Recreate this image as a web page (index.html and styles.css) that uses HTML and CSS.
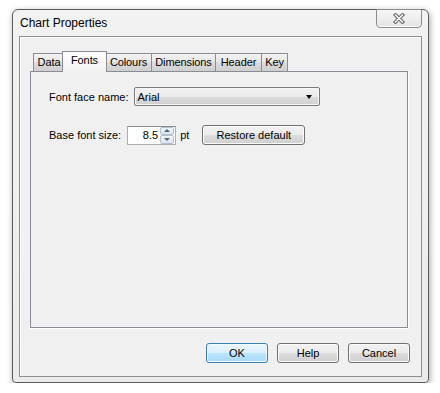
FILE: index.html
```html
<!DOCTYPE html>
<html>
<head>
<meta charset="utf-8">
<link rel="stylesheet" href="styles.css">
</head>
<body>
<div class="window">
  <div class="titlebar">
    <span class="title">Chart Properties</span>
    <div class="close">
      <svg width="14" height="11" viewBox="0 0 14 11">
        <path d="M3.5 2 L10.5 9 M10.5 2 L3.5 9" stroke="#6b6b6b" stroke-width="3.6" stroke-linecap="square" fill="none"/>
        <path d="M3.5 2 L10.5 9 M10.5 2 L3.5 9" stroke="#ffffff" stroke-width="1.4" stroke-linecap="square" fill="none"/>
      </svg>
    </div>
  </div>
  <div class="client">
    <div class="notebook">
      <div class="tabs">
        <div class="tab tab-data">Data</div>
        <div class="tab tab-active">Fonts</div>
        <div class="tab tab-colours">Colours</div>
        <div class="tab tab-dimensions">Dimensions</div>
        <div class="tab tab-header">Header</div>
        <div class="tab tab-key">Key</div>
      </div>
      <div class="panel">
        <div class="row">
          <span class="label">Font face name:</span>
          <div class="combo">
            <span>Arial</span>
            <span class="combo-arrow"></span>
          </div>
        </div>
        <div class="row row-second">
          <span class="label label-base">Base font size:</span>
          <div class="spin">
            <span class="spin-value">8.5</span>
            <div class="spin-buttons">
              <div class="spin-btn"><span class="arr-up"></span></div>
              <div class="spin-btn"><span class="arr-down"></span></div>
            </div>
          </div>
          <span class="unit">pt</span>
          <button class="btn btn-restore">Restore default</button>
        </div>
      </div>
    </div>
    <div class="buttons">
      <button class="btn btn-default">OK</button>
      <button class="btn">Help</button>
      <button class="btn">Cancel</button>
    </div>
  </div>
</div>
</body>
</html>
```
FILE: styles.css
```css
html, body {
  margin: 0;
  padding: 0;
  background: #ffffff;
}
body {
  font-family: "Liberation Sans", Arial, sans-serif;
  font-size: 11px;
  color: #000;
}
.window {
  margin: 9px 0 0 12px;
  width: 417px;
  height: 374px;
  box-sizing: border-box;
  border: 1px solid #5c5c5c;
  border-radius: 6px 6px 4px 4px;
  background: linear-gradient(#f2f2f2, #ebebeb);
  box-shadow: 1px 2px 6px rgba(0,0,0,0.35);
  display: flex;
  flex-direction: column;
  padding: 0 6px 5px 6px;
}
.titlebar {
  position: relative;
  height: 26px;
  line-height: 27px;
  font-size: 12px;
  padding-left: 1px;
  flex: none;
}
.close {
  position: absolute;
  right: 0;
  top: -1px;
  width: 46px;
  height: 19px;
  box-sizing: border-box;
  border: 1px solid #8b8b8b;
  border-radius: 0 0 4px 4px;
  background: linear-gradient(#f7f7f7, #e4e4e4);
  box-shadow: inset 0 -1px 0 #ffffff;
  display: flex;
  align-items: center;
  justify-content: center;
}
.close svg {
  display: block;
}
.client {
  flex: 1;
  box-sizing: border-box;
  border: 1px solid #8e8e8e;
  background: #f0f0f0;
  box-shadow: inset 1px 1px 0 #ffffff;
  padding-top: 14px;
  display: flex;
  flex-direction: column;
}
.notebook {
  margin-left: 10px;
  width: 378px;
}
.tabs {
  display: flex;
  align-items: flex-end;
  height: 20px;
  margin-left: 3px;
  position: relative;
  z-index: 1;
}
.tab {
  height: 18px;
  line-height: 17px;
  box-sizing: border-box;
  padding: 0;
  text-align: center;
  white-space: nowrap;
  border: 1px solid #898c95;
  border-right: none;
  border-bottom: none;
  background: linear-gradient(#f3f3f3, #e6e6e6 50%, #dcdcdc 50%, #cfcfcf);
  color: #000;
  letter-spacing: -0.1px;
}
.tab-data { width: 31px; }
.tab-colours { width: 46px; }
.tab-dimensions { width: 64px; }
.tab-header { width: 46px; }
.tab-key { width: 27px; border-right: 1px solid #898c95; }
.tab-active {
  width: 45px;
  height: 21px;
  margin: 0 -2px -1px -2px;
  line-height: 17px;
  border-right: 1px solid #898c95;
  background: linear-gradient(#ffffff, #f6f6f6 70%, #f0f0f0);
  position: relative;
  z-index: 2;
}
.panel {
  height: 257px;
  box-sizing: border-box;
  border: 1px solid #898c95;
  background: #f0f0f0;
  box-shadow: 0 1px 0 #ffffff, 1px 0 0 #ffffff;
  padding: 15px 18px;
}
.row {
  display: flex;
  align-items: center;
  height: 19px;
}
.row-second {
  margin-top: 19px;
  height: 20px;
}
.label {
  margin-right: 5px;
  white-space: nowrap;
}
.label-base {
  margin-right: 6px;
}
.combo {
  width: 186px;
  height: 19px;
  box-sizing: border-box;
  border: 1px solid #7a7a7a;
  border-radius: 2px;
  background: linear-gradient(#f2f2f2, #ebebeb 50%, #dddddd 50%, #cfcfcf);
  box-shadow: inset 0 0 0 1px #f8f8f8;
  display: flex;
  align-items: center;
  justify-content: space-between;
  padding: 0 7px 0 3px;
}
.combo-arrow {
  width: 0;
  height: 0;
  border-left: 3.5px solid transparent;
  border-right: 3.5px solid transparent;
  border-top: 4px solid #000;
  margin-top: 1px;
}
.spin {
  width: 49px;
  height: 19px;
  box-sizing: border-box;
  border: 1px solid #abadb3;
  border-top-color: #8a8c92;
  background: #ffffff;
  display: flex;
  align-items: center;
  justify-content: flex-end;
  padding-right: 1px;
}
.spin-value {
  margin-right: 2px;
}
.spin-buttons {
  width: 14px;
  height: 17px;
  display: flex;
  flex-direction: column;
}
.spin-btn {
  flex: 1;
  box-sizing: border-box;
  border: 1px solid #b4bfcf;
  border-radius: 2px;
  background: linear-gradient(#f3f6fa, #dde4ee);
  display: flex;
  align-items: center;
  justify-content: center;
}
.arr-up {
  width: 0;
  height: 0;
  border-left: 3px solid transparent;
  border-right: 3px solid transparent;
  border-bottom: 3px solid #4d6185;
}
.arr-down {
  width: 0;
  height: 0;
  border-left: 3px solid transparent;
  border-right: 3px solid transparent;
  border-top: 3px solid #4d6185;
}
.unit {
  margin-left: 4px;
  margin-right: 13px;
}
.btn {
  font-family: "Liberation Sans", Arial, sans-serif;
  font-size: 11px;
  color: #000;
  height: 20px;
  box-sizing: border-box;
  border: 1px solid #707070;
  border-radius: 3px;
  background: linear-gradient(#f2f2f2, #ebebeb 50%, #dddddd 50%, #cfcfcf);
  box-shadow: inset 0 0 0 1px #fbfbfb;
  padding: 0;
  margin: 0;
  line-height: 17px;
}
.btn-restore {
  width: 103px;
}
.buttons {
  display: flex;
  justify-content: flex-end;
  gap: 9px;
  margin-top: 15px;
  padding-right: 11px;
}
.buttons .btn {
  width: 62px;
}
.btn-default {
  border-color: #3c7fb1;
  background: linear-gradient(#eaf6fd, #d9f0fc 50%, #bee6fd 50%, #a7d9f5);
  box-shadow: inset 0 0 0 1px #f4fbff;
}
```
